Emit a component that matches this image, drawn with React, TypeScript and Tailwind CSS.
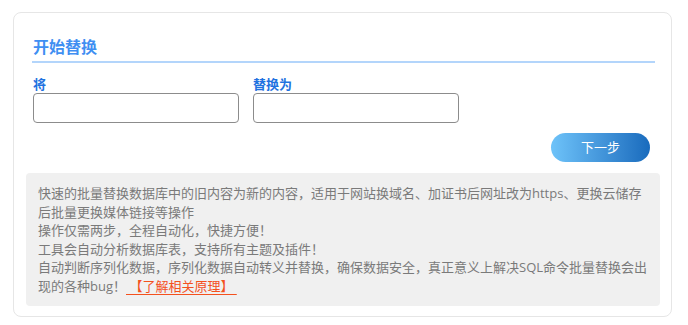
import React from "react";

export default function App() {
  const font = { fontFamily: '"Open Sans", "Noto Sans CJK SC", sans-serif' };
  return (
    <div className="w-[688px] h-[325px] bg-white pt-[12px] pl-[13px]" style={font}>
      <div className="w-[659px] h-[305px] border border-[#e6e6e6] rounded-[8px] bg-white pl-[12px] pr-[11px] flex flex-col">
        <div className="ml-[6px] mr-[5px] mt-[23px] border-b-2 border-[#b3d5fb] pb-[3px] pl-[1px]">
          <h2 className="text-[16px] leading-[22px] font-bold text-[#3f8ff2]">开始替换</h2>
        </div>
        <div className="flex gap-[14px] ml-[7px] mt-[13px]">
          <div className="flex flex-col w-[206px]">
            <label className="text-[13px] leading-[17px] font-bold text-[#1f72e0]">将</label>
            <input className="h-[30px] border border-[#8c8c8c] rounded-[4px] bg-white outline-none" />
          </div>
          <div className="flex flex-col w-[206px]">
            <label className="text-[13px] leading-[17px] font-bold text-[#1f72e0]">替换为</label>
            <input className="h-[30px] border border-[#8c8c8c] rounded-[4px] bg-white outline-none" />
          </div>
        </div>
        <div className="flex justify-end mt-[10px] pr-[10px]">
          <button className="w-[99px] h-[29px] rounded-full bg-gradient-to-r from-[#6ec3f9] to-[#186bbd] text-white text-[13px] leading-[29px]">
            下一步
          </button>
        </div>
        <div className="mt-[11px] bg-[#f0f0f0] rounded-[4px] pl-[12px] pr-[8px] py-[11px] text-[13px] leading-[18.5px] text-[#7a7a7a]">
          <div>快速的批量替换数据库中的旧内容为新的内容，适用于网站换域名、加证书后网址改为https、更换云储存后批量更换媒体链接等操作</div>
          <div>操作仅需两步，全程自动化，快捷方便！</div>
          <div>工具会自动分析数据库表，支持所有主题及插件！</div>
          <div>
            自动判断序列化数据，序列化数据自动转义并替换，确保数据安全，真正意义上解决SQL命令批量替换会出现的各种bug！
            <a className="text-[#f4511e] underline underline-offset-[3px]" href="#">
              &nbsp;【了解相关原理】&nbsp;
            </a>
          </div>
        </div>
      </div>
    </div>
  );
}
